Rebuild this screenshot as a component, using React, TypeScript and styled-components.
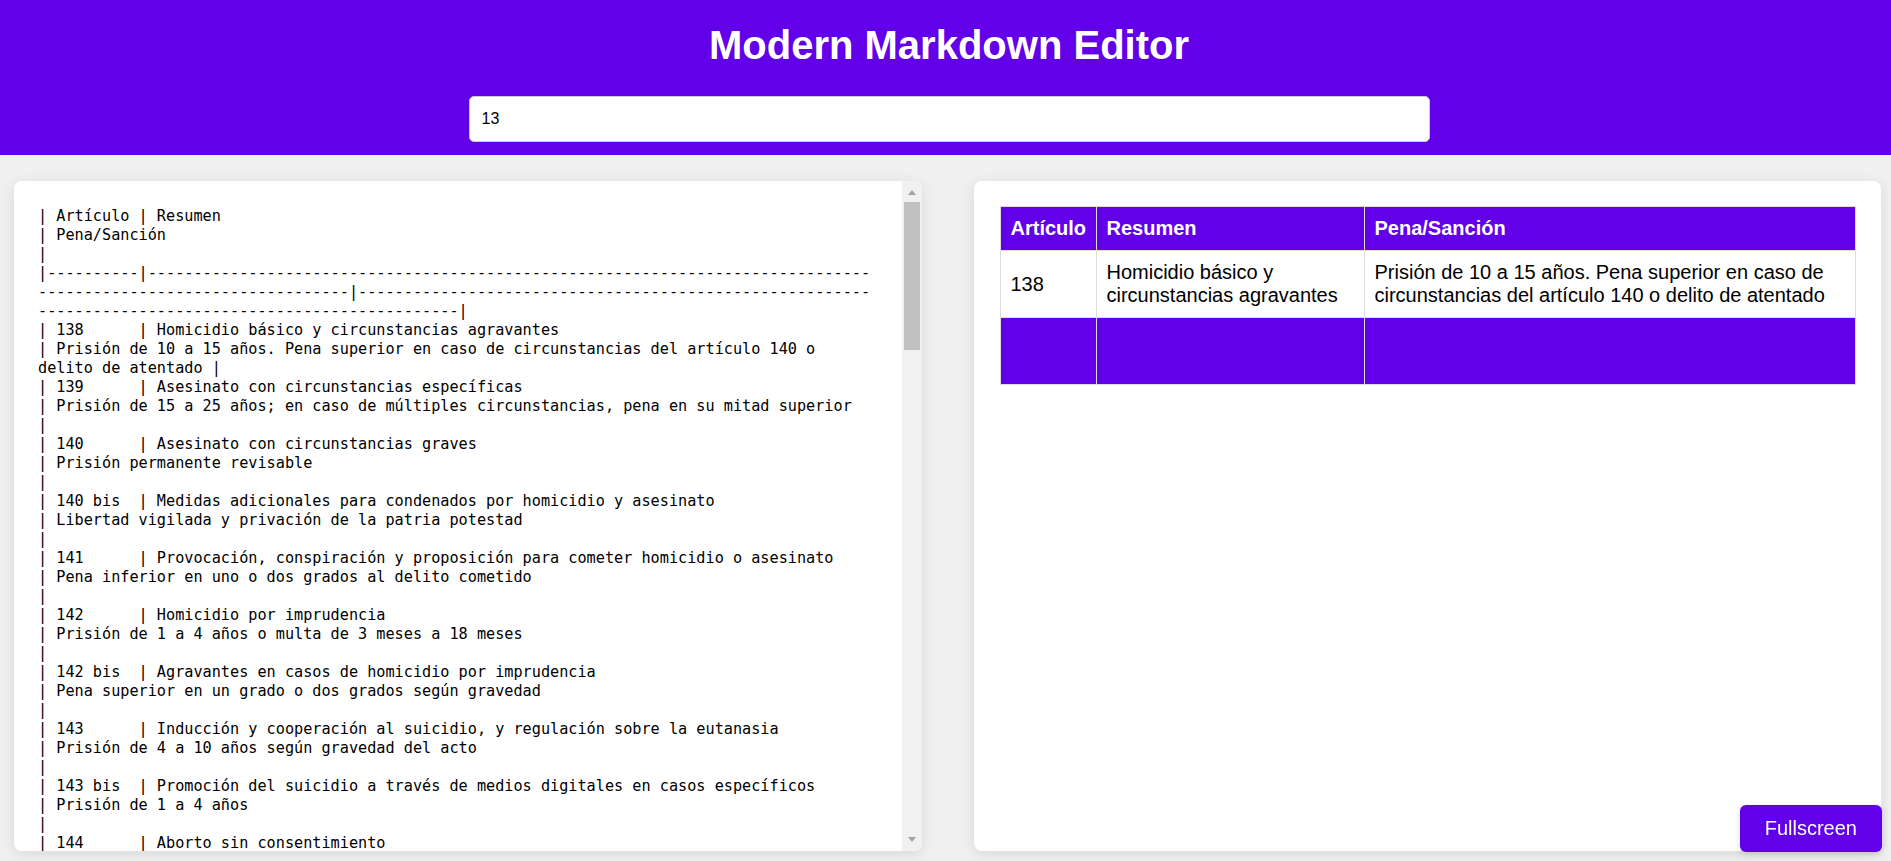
import styled, { createGlobalStyle } from 'styled-components'

const purple = '#6200ea'
const lineColor = '#dddddd'
const railColor = '#f1f1f1'
const arrowColor = '#a3a3a3'

const GlobalStyle = createGlobalStyle`
  html, body {
    margin: 0;
    height: 100%;
  }
  body {
    background: #f0f0f0;
    font-family: 'Liberation Sans', Arial, sans-serif;
    overflow: hidden;
  }
  #root {
    height: 100%;
  }
`

const Page = styled.div`
  display: flex;
  flex-direction: column;
  height: 100vh;
`

const Header = styled.header`
  background: ${purple};
  padding: 22px 0 13px 7px;
  display: flex;
  flex-direction: column;
  align-items: center;
`

const Title = styled.h1`
  margin: 0 0 28px;
  color: #fff;
  font-size: 40px;
  line-height: 46px;
  font-weight: bold;
`

const SearchInput = styled.input`
  box-sizing: border-box;
  width: 961px;
  height: 46px;
  padding: 0 12px;
  border: 1px solid #cccccc;
  border-radius: 5px;
  font-family: inherit;
  font-size: 16px;
  color: #000;
  background: #fff;
  outline: none;
`

const Workspace = styled.main`
  flex: 1;
  min-height: 0;
  display: grid;
  grid-template-columns: minmax(0, 1fr) minmax(0, 1fr);
  gap: 52px;
  padding: 26px 10px 10px 14px;
`

const EditorPanel = styled.div`
  display: flex;
  min-height: 0;
  background: #fff;
  border-radius: 8px;
  box-shadow: 0 3px 14px rgba(0, 0, 0, 0.1);
  overflow: hidden;
`

const EditorPane = styled.textarea`
  flex: 1 1 0;
  min-width: 0;
  box-sizing: border-box;
  height: 100%;
  margin: 0;
  padding: 26px 0 25px 24px;
  border: none;
  outline: none;
  resize: none;
  background: #fff;
  color: #000;
  font-family: 'DejaVu Sans Mono', 'Liberation Mono', monospace;
  font-size: 15.2px;
  line-height: 19px;
  white-space: pre;
  overflow: hidden;
  scrollbar-width: none;
`

const ScrollRail = styled.div`
  flex: 0 0 20px;
  display: flex;
  flex-direction: column;
  background: ${railColor};
`

const RailArrow = styled.div<{ $dir: 'up' | 'down' }>`
  flex: 0 0 20px;
  box-sizing: border-box;
  display: flex;
  justify-content: center;
  padding-top: ${(p) => (p.$dir === 'up' ? '9px' : '6px')};

  &::before {
    content: '';
    width: 0;
    height: 0;
    border-left: 4px solid transparent;
    border-right: 4px solid transparent;
    ${(p) =>
      p.$dir === 'up'
        ? `border-bottom: 5px solid ${arrowColor};`
        : `border-top: 5px solid ${arrowColor};`}
  }
`

const RailTrack = styled.div`
  flex: 1;
  padding: 1px 2px 0;
`

const RailThumb = styled.div`
  height: 148px;
  background: #c1c1c1;
`

const PreviewPane = styled.section`
  box-sizing: border-box;
  min-height: 0;
  padding: 25px 25px 25px 26px;
  background: #fff;
  border-radius: 8px;
  box-shadow: 0 3px 14px rgba(0, 0, 0, 0.1);
  overflow: hidden;
`

const Table = styled.table`
  width: 100%;
  border-collapse: collapse;
  table-layout: fixed;
  font-size: 20px;
  color: #000;
`

const Col = styled.col<{ $width?: number }>`
  width: ${(p) => (p.$width ? `${p.$width}px` : 'auto')};
`

const HeadCell = styled.th`
  padding: 10px;
  border: 1px solid ${lineColor};
  background: ${purple};
  color: #fff;
  font-weight: bold;
  text-align: left;
`

const Cell = styled.td<{ $blank?: boolean }>`
  padding: 10px;
  border: 1px solid ${lineColor};
  background: ${(p) => (p.$blank ? purple : '#fff')};
  height: ${(p) => (p.$blank ? '46px' : 'auto')};
  text-align: left;
`

const FullscreenButton = styled.button`
  position: fixed;
  right: 9px;
  bottom: 9px;
  padding: 12px 25px;
  border: none;
  border-radius: 6px;
  background: ${purple};
  color: #fff;
  font-family: 'Liberation Sans', Arial, sans-serif;
  font-size: 20px;
  line-height: 23px;
  box-shadow: 0 2px 6px rgba(0, 0, 0, 0.15);
  cursor: pointer;
`

const rows: [string, string, string][] = [
  ['139', 'Asesinato con circunstancias específicas', 'Prisión de 15 a 25 años; en caso de múltiples circunstancias, pena en su mitad superior'],
  ['140', 'Asesinato con circunstancias graves', 'Prisión permanente revisable'],
  ['140 bis', 'Medidas adicionales para condenados por homicidio y asesinato', 'Libertad vigilada y privación de la patria potestad'],
  ['141', 'Provocación, conspiración y proposición para cometer homicidio o asesinato', 'Pena inferior en uno o dos grados al delito cometido'],
  ['142', 'Homicidio por imprudencia', 'Prisión de 1 a 4 años o multa de 3 meses a 18 meses'],
  ['142 bis', 'Agravantes en casos de homicidio por imprudencia', 'Pena superior en un grado o dos grados según gravedad'],
  ['143', 'Inducción y cooperación al suicidio, y regulación sobre la eutanasia', 'Prisión de 4 a 10 años según gravedad del acto'],
  ['143 bis', 'Promoción del suicidio a través de medios digitales en casos específicos', 'Prisión de 1 a 4 años'],
  ['144', 'Aborto sin consentimiento', 'Prisión de 4 a 8 años e inhabilitación especial'],
  ['145', 'Aborto con consentimiento fuera de los casos permitidos', 'Prisión de 1 a 3 años o multa'],
  ['145 bis', 'Aborto sin cumplir los requisitos legales', 'Multa de 6 a 12 meses e inhabilitación especial'],
  ['146', 'Aborto por imprudencia grave', 'Prisión de 3 a 5 meses o multa de 6 a 10 meses'],
  ['147', 'Lesiones básicas', 'Prisión de 3 meses a 3 años o multa de 6 a 12 meses'],
  ['148', 'Lesiones agravadas', 'Prisión de 2 a 5 años'],
  ['149', 'Lesiones con pérdida de órgano o miembro principal', 'Prisión de 6 a 12 años'],
  ['150', 'Lesiones con pérdida de órgano no principal o deformidad', 'Prisión de 3 a 6 años'],
  ['151', 'Provocación, conspiración y proposición para lesiones', 'Pena inferior en uno o dos grados'],
  ['152', 'Lesiones por imprudencia grave', 'Prisión de 3 a 6 meses o multa de 6 a 18 meses'],
  ['153', 'Violencia en el ámbito familiar', 'Prisión de 6 meses a 1 año o trabajos en beneficio de la comunidad'],
  ['154', 'Riña tumultuaria con medios peligrosos', 'Prisión de 3 meses a 1 año o multa de 6 a 24 meses'],
  ['155', 'Consentimiento en las lesiones', 'Pena inferior en uno o dos grados'],
  ['156', 'Excepciones al consentimiento', 'Exención de responsabilidad penal'],
  ['156 bis', 'Tráfico de órganos humanos', 'Prisión de 6 a 12 años'],
  ['157', 'Lesiones al feto', 'Prisión de 1 a 4 años e inhabilitación especial'],
  ['158', 'Lesiones al feto por imprudencia grave', 'Prisión de 3 a 5 meses o multa de 6 a 10 meses'],
  ['159', 'Manipulación genética con fines distintos a eliminar enfermedades', 'Prisión de 2 a 6 años'],
  ['160', 'Utilización de la ingeniería genética para producir armas biológicas', 'Prisión de 3 a 7 años'],
  ['161', 'Fecundación de óvulos con fines distintos a la procreación', 'Prisión de 1 a 5 años'],
  ['162', 'Reproducción asistida sin consentimiento de la mujer', 'Prisión de 2 a 6 años'],
  ['163', 'Detención ilegal', 'Prisión de 4 a 6 años'],
]

const markdown = [
  '| Artículo | Resumen',
  '| Pena/Sanción',
  '|',
  '|----------|' + '-'.repeat(79),
  '-'.repeat(34) + '|' + '-'.repeat(56),
  '-'.repeat(46) + '|',
  '| 138      | Homicidio básico y circunstancias agravantes',
  '| Prisión de 10 a 15 años. Pena superior en caso de circunstancias del artículo 140 o',
  'delito de atentado |',
  ...rows.flatMap(([art, summary, penalty]) => [
    `| ${art.padEnd(8)} | ${summary}`,
    `| ${penalty}`,
    '|',
  ]),
].join('\n')

function App() {
  return (
    <>
      <GlobalStyle />
      <Page>
        <Header>
          <Title>Modern Markdown Editor</Title>
          <SearchInput type="text" defaultValue="13" />
        </Header>
        <Workspace>
          <EditorPanel>
            <EditorPane defaultValue={markdown} wrap="off" spellCheck={false} />
            <ScrollRail>
              <RailArrow $dir="up" />
              <RailTrack>
                <RailThumb />
              </RailTrack>
              <RailArrow $dir="down" />
            </ScrollRail>
          </EditorPanel>
          <PreviewPane>
            <Table>
              <colgroup>
                <Col $width={96} />
                <Col $width={268} />
                <Col />
              </colgroup>
              <thead>
                <tr>
                  <HeadCell>Artículo</HeadCell>
                  <HeadCell>Resumen</HeadCell>
                  <HeadCell>Pena/Sanción</HeadCell>
                </tr>
              </thead>
              <tbody>
                <tr>
                  <Cell>138</Cell>
                  <Cell>Homicidio básico y circunstancias agravantes</Cell>
                  <Cell>
                    Prisión de 10 a 15 años. Pena superior en caso de circunstancias del artículo 140 o
                    delito de atentado
                  </Cell>
                </tr>
                <tr>
                  <Cell $blank />
                  <Cell $blank />
                  <Cell $blank />
                </tr>
              </tbody>
            </Table>
          </PreviewPane>
        </Workspace>
        <FullscreenButton>Fullscreen</FullscreenButton>
      </Page>
    </>
  )
}

export default App
